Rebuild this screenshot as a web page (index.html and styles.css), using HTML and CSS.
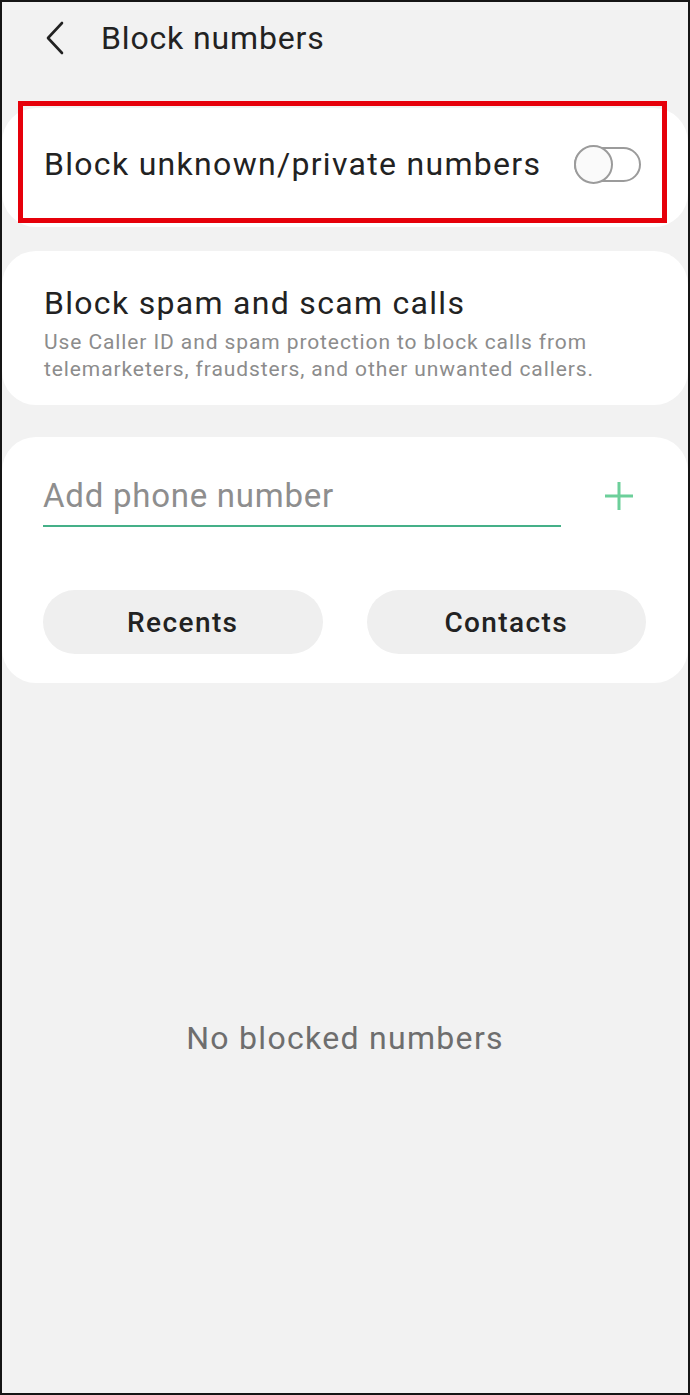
FILE: index.html
```html
<!DOCTYPE html>
<html lang="en">
<head>
<meta charset="utf-8">
<title>Block numbers</title>
<link rel="stylesheet" href="styles.css">
</head>
<body>
<div class="screen">
  <header class="topbar">
    <svg class="back" width="22" height="34" viewBox="0 0 22 34" aria-hidden="true">
      <path d="M18 2 L4 17 L18 32" fill="none" stroke="#222" stroke-width="2.6" stroke-linecap="round" stroke-linejoin="round"/>
    </svg>
    <h1 class="title">Block numbers</h1>
  </header>

  <main class="cards">
    <section class="card card-toggle">
      <span class="row-label">Block unknown/private numbers</span>
      <span class="toggle"><span class="knob"></span></span>
      <span class="highlight"></span>
    </section>

    <section class="card card-spam">
      <div class="row-label">Block spam and scam calls</div>
      <div class="sub">Use Caller ID and spam protection to block calls from telemarketers, fraudsters, and other unwanted callers.</div>
    </section>

    <section class="card card-add">
      <div class="add-row">
        <div class="field">Add phone number</div>
        <svg class="plus" width="30" height="30" viewBox="0 0 30 30" aria-hidden="true">
          <path d="M15 1 V29 M1 15 H29" stroke="#6ccf9a" stroke-width="3" fill="none"/>
        </svg>
      </div>
      <div class="btn-row">
        <button class="pill">Recents</button>
        <button class="pill">Contacts</button>
      </div>
    </section>
  </main>

  <div class="empty">No blocked numbers</div>
</div>
</body>
</html>
```

FILE: styles.css
```css
html, body {
  margin: 0;
  padding: 0;
}
body {
  font-family: Roboto, "Noto Sans", "Liberation Sans", sans-serif;
  background: #f2f2f2;
}
.screen {
  width: 690px;
  height: 1395px;
  box-sizing: border-box;
  border: 2px solid #151515;
  background: #f2f2f2;
  display: flex;
  flex-direction: column;
}
.topbar {
  height: 72px;
  display: flex;
  align-items: center;
  padding-left: 42px;
}
.back {
  display: block;
  margin-right: 35px;
}
.title {
  margin: 0;
  font-size: 32px;
  font-weight: 400;
  letter-spacing: 0.85px;
  color: #222;
  line-height: 40px;
}
.cards {
  padding-top: 34px;
  display: flex;
  flex-direction: column;
  gap: 26px;
}
.card {
  background: #fff;
  border-radius: 34px;
  position: relative;
  box-sizing: border-box;
}
.row-label {
  font-size: 32px;
  letter-spacing: 1.3px;
  color: #222;
  line-height: 40px;
}
.card-toggle {
  height: 119px;
  display: flex;
  align-items: center;
  justify-content: space-between;
  padding: 0 47px 0 42px;
}
.card-toggle .row-label {
  margin-top: -7px;
}
.toggle {
  position: relative;
  width: 67px;
  height: 35px;
  box-sizing: border-box;
  border: 2px solid #9b9b9b;
  border-radius: 18px;
  margin-top: -6px;
}
.knob {
  position: absolute;
  left: -2px;
  top: -4px;
  width: 39px;
  height: 39px;
  box-sizing: border-box;
  border: 2px solid #9b9b9b;
  border-radius: 50%;
  background: #fafafa;
}
.highlight {
  position: absolute;
  left: 16px;
  top: -7px;
  width: 649px;
  height: 122px;
  box-sizing: border-box;
  border: 5px solid #e6000a;
  pointer-events: none;
}
.card-spam {
  height: 154px;
  padding: 32px 42px 0 42px;
  margin-top: -2px;
}
.sub {
  margin-top: 6px;
  font-size: 21px;
  letter-spacing: 0.9px;
  line-height: 27px;
  color: #8c8c8c;
  padding-right: 40px;
}
.card-add {
  height: 246px;
  padding: 32px 42px 0 41px;
  margin-top: 6px;
}
.add-row {
  display: flex;
  align-items: center;
}
.field {
  width: 518px;
  box-sizing: border-box;
  font-size: 33px;
  letter-spacing: 0.75px;
  line-height: 54px;
  color: #8e8e8e;
  border-bottom: 2px solid #45b088;
  padding-bottom: 2px;
}
.plus {
  display: block;
  margin-left: 43px;
  margin-top: -4px;
}
.btn-row {
  margin-top: 63px;
  display: flex;
  gap: 44px;
}
.pill {
  width: 280px;
  height: 64px;
  border: none;
  border-radius: 32px;
  background: #efefef;
  font-family: Roboto, "Noto Sans", "Liberation Sans", sans-serif;
  font-size: 28px;
  font-weight: 500;
  letter-spacing: 1.4px;
  color: #222;
  padding: 0;
}
.empty {
  margin-top: 335px;
  text-align: center;
  font-size: 32px;
  letter-spacing: 1.3px;
  line-height: 40px;
  color: #6e6e6e;
}
```
